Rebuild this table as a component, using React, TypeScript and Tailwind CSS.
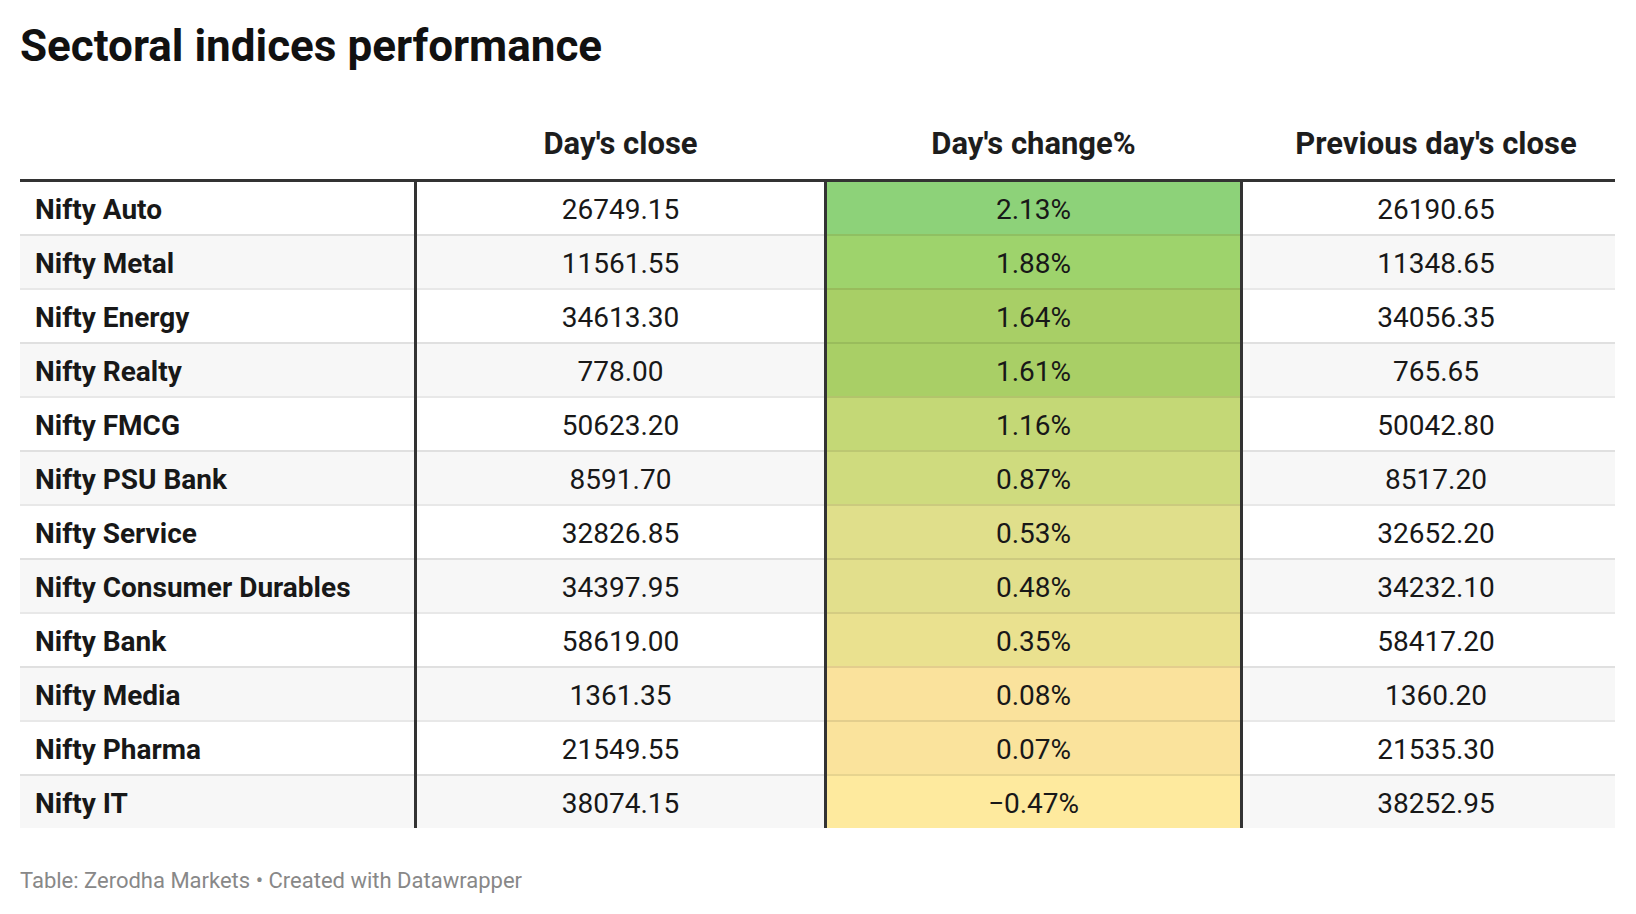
import React from "react";

type Row = { name: string; close: string; change: string; prev: string; color: string };

const rows: Row[] = [
  { name: "Nifty Auto", close: "26749.15", change: "2.13%", prev: "26190.65", color: "#8dd279" },
  { name: "Nifty Metal", close: "11561.55", change: "1.88%", prev: "11348.65", color: "#9ed36c" },
  { name: "Nifty Energy", close: "34613.30", change: "1.64%", prev: "34056.35", color: "#a8cf66" },
  { name: "Nifty Realty", close: "778.00", change: "1.61%", prev: "765.65", color: "#a9cf66" },
  { name: "Nifty FMCG", close: "50623.20", change: "1.16%", prev: "50042.80", color: "#c4d876" },
  { name: "Nifty PSU Bank", close: "8591.70", change: "0.87%", prev: "8517.20", color: "#cfdb7e" },
  { name: "Nifty Service", close: "32826.85", change: "0.53%", prev: "32652.20", color: "#e0df8b" },
  { name: "Nifty Consumer Durables", close: "34397.95", change: "0.48%", prev: "34232.10", color: "#e2df8c" },
  { name: "Nifty Bank", close: "58619.00", change: "0.35%", prev: "58417.20", color: "#eae18f" },
  { name: "Nifty Media", close: "1361.35", change: "0.08%", prev: "1360.20", color: "#fae29c" },
  { name: "Nifty Pharma", close: "21549.55", change: "0.07%", prev: "21535.30", color: "#fae39c" },
  { name: "Nifty IT", close: "38074.15", change: "\u22120.47%", prev: "38252.95", color: "#feea9e" },
];

export default function App() {
  return (
    <div
      className="w-[1636px] h-[914px] bg-white text-[#181818] pl-[20px] pr-[21px] pt-[20px]"
      style={{ fontFamily: "Roboto, 'Liberation Sans', sans-serif" }}
    >
      <h1 className="text-[44px] leading-[52px] font-bold text-[#111]">
        Sectoral indices performance
      </h1>

      <div className="mt-[54px] w-[1595px]">
        {/* header */}
        <div className="flex text-[31px] leading-[36px] font-bold text-[#1d1d1d] pb-[17px] border-b-[3px] border-[#333]">
          <div className="w-[394px]" />
          <div className="w-[410px] text-center pl-[3px]">Day's close</div>
          <div className="w-[416px] text-center pl-[3px]">Day's change%</div>
          <div className="w-[375px] text-center pl-[17px]">Previous day's close</div>
        </div>

        {/* body */}
        {rows.map((r, i) => {
          const first = i === 0;
          const rowBg = i % 2 === 0 ? "bg-white" : "bg-[#f7f7f7]";
          const h = first ? "h-[52px] pt-[3px]" : "h-[54px] pt-[5px]";
          const line = first ? "" : "shadow-[inset_0_2px_0_rgba(0,0,0,0.09)]";
          return (
            <div key={r.name} className={`flex text-[28px] leading-[32px] ${rowBg}`}>
              <div className={`w-[394px] ${h} ${line} flex items-center pl-[15px] font-bold`}>
                {r.name}
              </div>
              <div
                className={`w-[410px] ${h} ${line} flex items-center justify-center border-l-[3px] border-[#333]`}
              >
                {r.close}
              </div>
              <div
                className={`w-[416px] ${h} ${line} flex items-center justify-center border-l-[3px] border-[#333]`}
                style={{ backgroundColor: r.color }}
              >
                {r.change}
              </div>
              <div
                className={`w-[375px] ${h} ${line} flex items-center justify-center border-l-[3px] border-[#333] pl-[14px]`}
              >
                {r.prev}
              </div>
            </div>
          );
        })}
      </div>

      <div className="mt-[40px] text-[22px] leading-[26px] text-[#888]">
        Table: Zerodha Markets • Created with Datawrapper
      </div>
    </div>
  );
}
